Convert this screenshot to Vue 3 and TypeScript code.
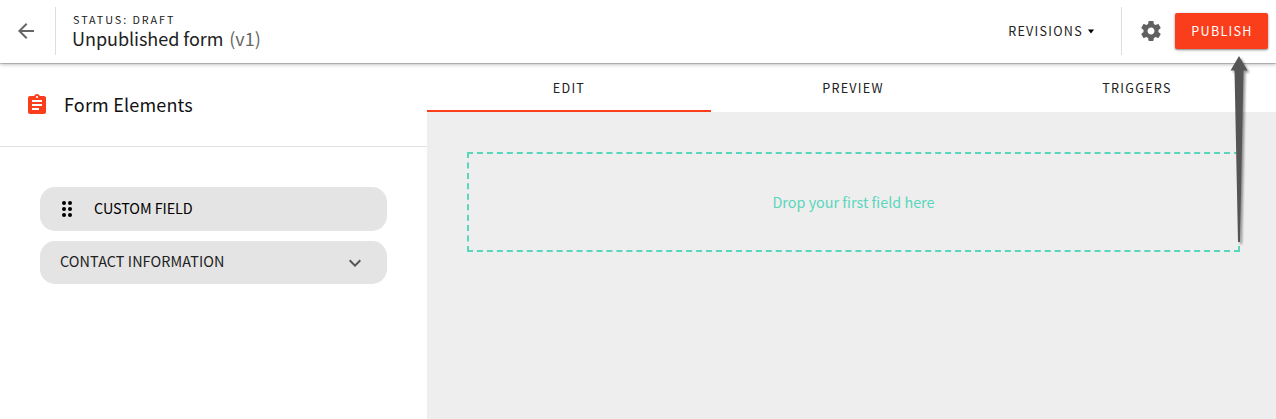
<script setup lang="ts">
import { ref } from 'vue'

const tabs: string[] = ['EDIT', 'PREVIEW', 'TRIGGERS']
const activeTab = ref<string>('EDIT')
</script>

<template>
  <div class="page">
    <header class="topbar">
      <button class="back" aria-label="Back">
        <svg width="24" height="24" viewBox="0 0 24 24"><path d="M20 11H7.83l5.59-5.59L12 4l-8 8 8 8 1.41-1.41L7.83 13H20v-2z" /></svg>
      </button>
      <div class="heading">
        <div class="status">STATUS: DRAFT</div>
        <div class="title"><span class="name">Unpublished form</span><span class="version">(v1)</span></div>
      </div>
      <button class="revisions">
        <span class="revisions-label">REVISIONS</span>
        <svg width="8" height="5" viewBox="0 0 8 5"><path d="M.9.5h6.2L4 4.5z" /></svg>
      </button>
      <div class="actions">
        <button class="gear" aria-label="Settings">
          <svg width="24" height="24" viewBox="0 0 24 24"><path d="M19.43 12.98c.04-.32.07-.64.07-.98s-.03-.66-.07-.98l2.11-1.65c.19-.15.24-.42.12-.64l-2-3.46c-.12-.22-.39-.3-.61-.22l-2.49 1c-.52-.4-1.08-.73-1.69-.98l-.38-2.65C14.46 2.18 14.25 2 14 2h-4c-.25 0-.46.18-.49.42l-.38 2.65c-.61.25-1.17.59-1.69.98l-2.49-1c-.23-.09-.49 0-.61.22l-2 3.46c-.13.22-.07.49.12.64l2.11 1.65c-.04.32-.07.65-.07.98s.03.66.07.98l-2.11 1.65c-.19.15-.24.42-.12.64l2 3.46c.12.22.39.3.61.22l2.49-1c.52.4 1.08.73 1.69.98l.38 2.65c.03.24.24.42.49.42h4c.25 0 .46-.18.49-.42l.38-2.65c.61-.25 1.17-.59 1.69-.98l2.49 1c.23.09.49 0 .61-.22l2-3.46c.12-.22.07-.49-.12-.64l-2.11-1.65zM12 15.5c-1.93 0-3.5-1.57-3.5-3.5s1.57-3.5 3.5-3.5 3.5 1.57 3.5 3.5-1.57 3.5-3.5 3.5z" /></svg>
        </button>
        <button class="publish"><span class="publish-label">PUBLISH</span></button>
      </div>
    </header>

    <div class="body">
      <aside class="sidebar">
        <div class="sidebar-head">
          <svg width="24" height="24" viewBox="0 0 24 24"><path d="M19 3h-4.18C14.4 1.84 13.3 1 12 1c-1.3 0-2.4.84-2.82 2H5c-1.1 0-2 .9-2 2v14c0 1.1.9 2 2 2h14c1.1 0 2-.9 2-2V5c0-1.1-.9-2-2-2zm-7 0c.55 0 1 .45 1 1s-.45 1-1 1-1-.45-1-1 .45-1 1-1zm2 14H7v-2h7v2zm3-4H7v-2h10v2zm0-4H7V7h10v2z" /></svg>
          <span class="sidebar-title">Form Elements</span>
        </div>
        <div class="elements">
          <div class="element custom">
            <svg width="12" height="18" viewBox="0 0 12 18">
              <circle cx="3" cy="3" r="2" /><circle cx="9" cy="3" r="2" />
              <circle cx="3" cy="9" r="2" /><circle cx="9" cy="9" r="2" />
              <circle cx="3" cy="15" r="2" /><circle cx="9" cy="15" r="2" />
            </svg>
            <span class="element-label">CUSTOM FIELD</span>
          </div>
          <div class="element contact">
            <span class="element-label">CONTACT INFORMATION</span>
            <svg width="24" height="24" viewBox="0 0 24 24"><path d="M16.59 8.59L12 13.17 7.41 8.59 6 10l6 6 6-6z" /></svg>
          </div>
        </div>
      </aside>

      <main class="workspace">
        <nav class="tabs">
          <button v-for="tab in tabs" :key="tab" class="tab" :class="{ active: tab === activeTab }" @click="activeTab = tab">
            <span class="tab-label">{{ tab }}</span>
          </button>
        </nav>
        <div class="canvas">
          <div class="dropzone"><span class="drop-label">Drop your first field here</span></div>
        </div>
      </main>
    </div>

    <svg class="arrow" width="40" height="200" viewBox="0 0 40 200">
      <path d="M19 6L27.5 20.5H23.5L20 192H18L14.5 20.5H10.5Z" />
    </svg>
  </div>
</template>

<style>
body {
  margin: 0;
  overflow: hidden;
}
</style>

<style scoped>
.page {
  position: relative;
  display: flex;
  flex-direction: column;
  height: 419px;
  overflow: hidden;
  background: #fff;
  color: #212121;
  font-family: "Noto Sans CJK SC", "Noto Sans", sans-serif;
}

button {
  display: flex;
  align-items: center;
  justify-content: center;
  padding: 0;
  border: 0;
  background: none;
  color: inherit;
  font: inherit;
}

span {
  white-space: nowrap;
}

svg {
  display: block;
  flex: none;
}

.topbar {
  z-index: 1;
  display: flex;
  flex: none;
  align-items: center;
  box-sizing: border-box;
  height: 63px;
  padding: 0 8px 1px 0;
  background: #fff;
  box-shadow: 0 1px 4px rgba(0, 0, 0, 0.35), 0 1px 0 rgba(0, 0, 0, 0.14);
}

.back {
  width: 55px;
  padding-right: 3px;
  box-sizing: border-box;
  fill: #666;
}

.heading {
  flex: 1;
  height: 48px;
  padding-left: 16px;
  box-sizing: border-box;
  border-left: 1px solid #dedede;
}

.status {
  margin-top: 4px;
  padding-left: 1px;
  font-size: 10.8px;
  line-height: 17px;
  letter-spacing: 1.93px;
}

.title {
  display: flex;
  gap: 6px;
  line-height: 20px;
  font-size: 18px;
  letter-spacing: -0.04px;
}

.version {
  color: #666;
}

.revisions {
  gap: 4px;
  margin-right: 26px;
}

.revisions-label,
.tab-label,
.publish-label {
  font-size: 12.6px;
  line-height: 20px;
  letter-spacing: 1.26px;
}

.actions {
  display: flex;
  align-items: center;
  height: 48px;
  border-left: 1px solid #dedede;
}

.gear {
  margin: 0 12px 0 17px;
  fill: #616161;
}

.publish {
  width: 93px;
  height: 36px;
  border-radius: 2px;
  background: #fa3e1c;
  box-shadow: 0 1px 3px rgba(0, 0, 0, 0.4), 0 1px 1px rgba(0, 0, 0, 0.14);
  color: #fff;
}

.publish-label {
  padding-left: 1px;
}

.body {
  display: flex;
  flex: 1;
}

.sidebar {
  width: 427px;
  flex: none;
}

.sidebar-head {
  display: flex;
  align-items: center;
  gap: 15px;
  box-sizing: border-box;
  height: 84px;
  padding-left: 25px;
  border-bottom: 1px solid #e1e1e1;
  fill: #fa3e1c;
}

.sidebar-title {
  padding-bottom: 2px;
  color: #111;
  font-size: 18px;
  line-height: 24px;
  letter-spacing: 0.18px;
}

.elements {
  display: flex;
  flex-direction: column;
  gap: 10px;
  padding: 40px;
}

.element {
  display: flex;
  align-items: center;
  height: 44px;
  padding: 0 20px;
  border-radius: 15px;
  background: #e4e4e4;
  font-size: 14.4px;
  line-height: 20px;
}

.element-label {
  padding-bottom: 2px;
}

.custom {
  gap: 21px;
  padding-left: 21px;
  color: #000;
  letter-spacing: -0.08px;
}

.contact {
  justify-content: space-between;
  height: 43px;
  fill: #555;
  letter-spacing: 0.09px;
}

.contact .element-label {
  padding-bottom: 3px;
}

.workspace {
  display: flex;
  flex: 1;
  flex-direction: column;
  min-width: 0;
}

.tabs {
  display: flex;
  height: 49px;
}

.tab {
  flex: none;
  width: 284px;
  border-bottom: 2px solid transparent;
}

.tab-label {
  padding-top: 2px;
}

.tab.active {
  border-color: #fa3e1c;
}

.canvas {
  flex: 1;
  padding: 40px 36px 0 40px;
  background: #eee;
}

.dropzone {
  display: flex;
  align-items: center;
  justify-content: center;
  box-sizing: border-box;
  height: 100px;
  border: 2px dashed #5ad6bc;
  color: #5ad6bc;
  font-size: 14.4px;
}

.drop-label {
  padding-bottom: 2px;
}

.arrow {
  position: absolute;
  z-index: 2;
  top: 50px;
  left: 1220px;
  fill: #555;
  filter: drop-shadow(2px 2px 1px rgba(0, 0, 0, 0.4));
}
</style>
